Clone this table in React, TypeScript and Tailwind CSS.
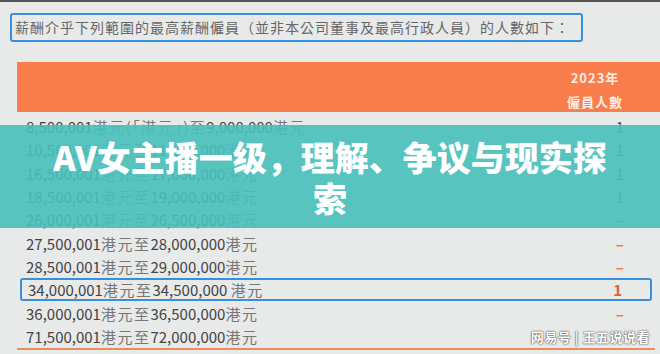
import React from 'react';

const rows: { from: string; mid: string; to: string; count: string; tone: 'gray' | 'orange' | 'hl' }[] = [
  { from: '8,500,001', mid: '港元(「港元」)至', to: '9,000,000', count: '1', tone: 'gray' },
  { from: '10,500,001', mid: '港元至', to: '11,000,000', count: '1', tone: 'gray' },
  { from: '16,500,001', mid: '港元至', to: '17,000,000', count: '1', tone: 'gray' },
  { from: '18,500,001', mid: '港元至', to: '19,000,000', count: '1', tone: 'gray' },
  { from: '26,000,001', mid: '港元至', to: '26,500,000', count: '–', tone: 'gray' },
  { from: '27,500,001', mid: '港元至', to: '28,000,000', count: '–', tone: 'orange' },
  { from: '28,500,001', mid: '港元至', to: '29,000,000', count: '–', tone: 'orange' },
  { from: '34,000,001', mid: '港元至', to: '34,500,000 ', count: '1', tone: 'hl' },
  { from: '36,000,001', mid: '港元至', to: '36,500,000', count: '–', tone: 'orange' },
  { from: '71,500,001', mid: '港元至', to: '72,000,000', count: '', tone: 'gray' },
];

export default function App() {
  return (
    <div className="relative w-[660px] h-[354px] overflow-hidden bg-[#e8e9e9] font-['Noto_Sans_CJK_TC',sans-serif]">
      <div className="h-[2px] bg-[#555]" />

      {/* intro box */}
      <div className="pt-[11px] pl-[10px]">
        <div className="h-[29px] w-[573px] border-2 border-[#3a8fdb] rounded-[3px] flex items-center px-[3px] text-[14px] tracking-[1px] text-[#666] whitespace-nowrap">
          薪酬介乎下列範圍的最高薪酬僱員（並非本公司董事及最高行政人員）的人數如下：
        </div>
      </div>

      {/* table header */}
      <div className="mt-[20px] ml-[17px] h-[50px] bg-[#fa7d4c] flex justify-end">
        <div className="w-[80px] mr-[25px] pt-[4px] flex flex-col items-center text-[13px] font-bold leading-[24px] text-[#fdeee4] tracking-[1px]">
          <span>2023年</span>
          <span>僱員人數</span>
        </div>
      </div>

      {/* rows */}
      <div className="mt-[3px] ml-[20px] mr-[8px]">
        {rows.map((r, i) => (
          <div
            key={i}
            className={`h-[23.3px] flex items-center justify-between pl-[6px] pr-[28px] text-[15px] leading-none ${
              r.tone === 'hl' ? 'border-2 border-[#3a8fdb] rounded-[3px] pl-[4px] pr-[26px]' : ''
            }`}
          >
            <span className="whitespace-nowrap">
              <span className="text-[#444]">{r.from}</span>
              <span className="text-[#777] tracking-[1.5px]">{r.mid}</span>
              <span className="text-[#444]">{r.to}</span>
              <span className="text-[#777] tracking-[1.5px]">港元</span>
            </span>
            <span
              className={`text-[15px] ${
                r.tone === 'gray' ? 'text-[#555]' : r.tone === 'hl' ? 'text-[#e0622e] font-bold' : 'text-[#f07a45] font-bold'
              }`}
            >
              {r.count}
            </span>
          </div>
        ))}
      </div>
      <div className="ml-[17px] mr-[5px] h-[2px] bg-[#ef8a5c]" />

      {/* title overlay */}
      <div className="absolute left-0 right-0 top-[125px] h-[103px] bg-[#48c0bb]/[0.9] flex items-center justify-center px-[45px]">
        <h1 className="text-center text-white font-black text-[34px] leading-[41px] font-['Noto_Sans_CJK_SC',sans-serif]">
          AV女主播一级，理解、争议与现实探索
        </h1>
      </div>

      {/* watermark */}
      <div className="absolute right-[10px] bottom-[8px] text-[13px] text-white font-bold tracking-[0.5px] [text-shadow:0_0_2px_#555,0_0_1px_#333] font-['Noto_Sans_CJK_SC',sans-serif]">
        网易号 | 王五说说看
      </div>
    </div>
  );
}
